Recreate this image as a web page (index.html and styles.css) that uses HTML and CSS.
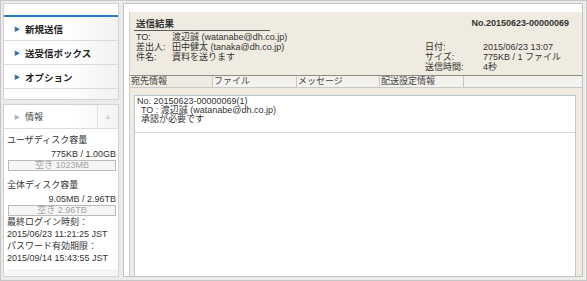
FILE: index.html
```html
<!DOCTYPE html>
<html lang="ja">
<head>
    <meta charset="UTF-8">
    <title>送信結果</title>
    <link rel="stylesheet" href="styles.css">
</head>
<body>
    <div class="frame">
        <aside class="sidebar">
            <nav class="menu">
                <div class="menu-top"></div>
                <a href="#" class="menu-item"><span class="bullet">&#9654;</span>新規送信</a>
                <a href="#" class="menu-item"><span class="bullet">&#9654;</span>送受信ボックス</a>
                <a href="#" class="menu-item"><span class="bullet">&#9654;</span>オプション</a>
                <div class="menu-foot"></div>
            </nav>

            <section class="info">
                <div class="info-head">
                    <span class="info-title"><span class="bullet-gray">&#9654;</span>情報</span>
                    <span class="info-toggle">&#9650;</span>
                </div>
                <div class="info-body">
                    <div class="disk">
                        <div class="label">ユーザディスク容量</div>
                        <div class="usage">775KB / 1.00GB</div>
                        <div class="free">空き 1023MB</div>
                    </div>
                    <div class="disk disk-total">
                        <div class="label">全体ディスク容量</div>
                        <div class="usage">9.05MB / 2.96TB</div>
                        <div class="free">空き 2.96TB</div>
                    </div>
                    <div class="label">最終ログイン時刻：</div>
                    <div class="label">2015/06/23 11:21:25 JST</div>
                    <div class="label">パスワード有効期限：</div>
                    <div class="label">2015/09/14 15:43:55 JST</div>
                </div>
            </section>
        </aside>

        <main class="panel">
            <div class="result">
                <div class="result-head">
                    <h1 class="title">送信結果</h1>
                    <span class="msg-no">No.20150623-00000069</span>
                </div>

                <div class="meta">
                    <span>TO:</span><span>渡辺誠 (watanabe@dh.co.jp)</span><span></span><span></span>
                    <span>差出人:</span><span>田中健太 (tanaka@dh.co.jp)</span><span>日付:</span><span>2015/06/23 13:07</span>
                    <span>件名:</span><span>資料を送ります</span><span>サイズ:</span><span>775KB / 1 ファイル</span>
                    <span></span><span></span><span>送信時間:</span><span>4秒</span>
                </div>

                <div class="tabs">
                    <span class="tab active">宛先情報</span>
                    <span class="tab">ファイル</span>
                    <span class="tab">メッセージ</span>
                    <span class="tab">配送設定情報</span>
                    <span class="tab"></span>
                </div>

                <div class="detail">
                    <div class="entry">
                        <div>No. 20150623-00000069(1)</div>
                        <div class="indent">TO : 渡辺誠 (watanabe@dh.co.jp)</div>
                        <div class="indent">承認が必要です</div>
                    </div>
                </div>
            </div>
        </main>
    </div>
</body>
</html>
```

FILE: styles.css
```css
* {
    margin: 0;
    padding: 0;
    box-sizing: border-box;
}

body {
    font-family: 'Liberation Sans', 'Noto Sans CJK JP', sans-serif;
    font-size: 9px;
    color: #333;
    background: #fff;
}

.frame {
    width: 587px;
    height: 281px;
    border: 1px solid #c6c6c6;
    background: #ebebeb;
    padding: 2px 3px 3px 2px;
    display: flex;
    gap: 4px;
}

/* Sidebar */
.sidebar {
    width: 116px;
    display: flex;
    flex-direction: column;
    gap: 4px;
}

.menu {
    background: #fff;
    border: 1px solid #d2d2d2;
}

.menu-top {
    height: 13px;
    border-bottom: 2px solid #2a7cc2;
}

.menu-item {
    display: flex;
    align-items: center;
    height: 24px;
    padding-left: 10px;
    border-bottom: 1px solid #dcdcdc;
    background: linear-gradient(to right, #fff 55%, #f1f1f1);
    color: #222;
    font-size: 9.5px;
    font-weight: bold;
    text-decoration: none;
}

.bullet {
    color: #2a6fb8;
    font-size: 6px;
    margin-right: 5px;
}

.menu-foot {
    height: 10px;
    background: linear-gradient(to right, #fff 55%, #f1f1f1);
}

.info {
    flex: 1;
    background: #fff;
    border: 1px solid #d2d2d2;
    display: flex;
    flex-direction: column;
}

.info-head {
    display: flex;
    height: 24px;
    border-bottom: 1px solid #dcdcdc;
    background: linear-gradient(to right, #fff 60%, #f3f3f3);
}

.info-title {
    flex: 1;
    display: flex;
    align-items: center;
    padding-left: 10px;
    color: #444;
}

.bullet-gray {
    color: #b4b4b4;
    font-size: 6px;
    margin-right: 5px;
}

.info-toggle {
    width: 21px;
    border-left: 1px solid #e4e4e4;
    display: flex;
    align-items: center;
    justify-content: center;
    color: #cfcfcf;
    font-size: 7px;
}

.info-body {
    flex: 1;
    padding: 5px 2px 0 3px;
    line-height: 12px;
    border-bottom: 7px solid #f6f6f6;
}

.usage {
    text-align: right;
    margin-top: 2px;
}

.free {
    height: 11px;
    line-height: 9px;
    border: 1px solid #bababa;
    background: #f5f5f5;
    color: #a3a3a3;
    text-align: center;
    margin-left: 1px;
}

.disk {
    margin-bottom: 8px;
}

.disk-total {
    margin-bottom: 0;
}

/* Result panel */
.panel {
    flex: 1;
    background: #fff;
    border: 1px solid #c4c4c4;
    padding: 8px 0 0 5px;
    display: flex;
}

.result {
    flex: 1;
    background: #efebe0;
    border-left: 1px solid #c6cfd9;
    display: flex;
    flex-direction: column;
}

.result-head {
    display: flex;
    justify-content: space-between;
    align-items: flex-start;
    padding: 6px 13px 0 4px;
}

.title {
    width: 136px;
    padding: 0 2px 1px;
    border-bottom: 1px solid #5a5a5a;
    font-size: 9.5px;
    line-height: 11px;
}

.msg-no {
    font-weight: bold;
    line-height: 11px;
}

.meta {
    display: grid;
    grid-template-columns: 36px 253px 58px 1fr;
    grid-auto-rows: 10px;
    line-height: 10px;
    padding: 1px 0 0 6px;
}

.tabs {
    display: grid;
    grid-template-columns: 82px 84px 83px 84px 1fr;
    margin-top: 3px;
    border-top: 1px solid #8c8c8c;
    border-bottom: 1px solid #c8c8c8;
    line-height: 11px;
}

.tab {
    padding-left: 1px;
    background: #f4f2ec;
    border-left: 1px solid #c8c8c8;
    color: #444;
}

.tab.active {
    background: #efebe0;
    border-left: none;
}

.detail {
    flex: 1;
    margin: 7px 6px 0 4px;
    background: #fff;
    border: 1px solid #b9c6d3;
    border-bottom: none;
}

.entry {
    padding: 1px 0 8px 2px;
    line-height: 9px;
    border-bottom: 1px solid #d6d6d6;
}

.indent {
    padding-left: 4px;
}
```
